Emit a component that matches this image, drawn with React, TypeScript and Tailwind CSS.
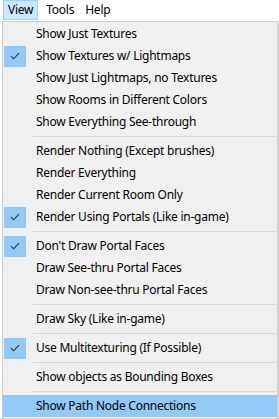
const items: (
  | { label: string; checked?: boolean; active?: boolean }
  | "sep"
)[] = [
  { label: "Show Just Textures" },
  { label: "Show Textures w/ Lightmaps", checked: true },
  { label: "Show Just Lightmaps, no Textures" },
  { label: "Show Rooms in Different Colors" },
  { label: "Show Everything See-through" },
  "sep",
  { label: "Render Nothing (Except brushes)" },
  { label: "Render Everything" },
  { label: "Render Current Room Only" },
  { label: "Render Using Portals (Like in-game)", checked: true },
  "sep",
  { label: "Don't Draw Portal Faces", checked: true },
  { label: "Draw See-thru Portal Faces" },
  { label: "Draw Non-see-thru Portal Faces" },
  "sep",
  { label: "Draw Sky (Like in-game)" },
  "sep",
  { label: "Use Multitexturing (If Possible)", checked: true },
  "sep",
  { label: "Show objects as Bounding Boxes" },
  "sep",
  { label: "Show Path Node Connections", active: true },
];

function Check() {
  return (
    <svg width="10" height="8" viewBox="0 0 10 8" fill="none">
      <path d="M1 4.2 L3.6 6.8 L9 1.2" stroke="#333" strokeWidth="1.1" />
    </svg>
  );
}

export default function App() {
  return (
    <div
      className="relative h-[419px] w-[279px] overflow-hidden bg-white text-[12px] tracking-[-0.25px] text-black"
      style={{ fontFamily: '"Noto Sans", "Open Sans", sans-serif' }}
    >
      <div className="flex h-[21px] items-start bg-white">
        <div className="ml-[3px] flex h-[20px] items-center border border-[#99d1ff] bg-[#cce8ff] px-[4px]">
          View
        </div>
        <div className="flex h-[20px] items-center px-[8px]">Tools</div>
        <div className="flex h-[20px] items-center px-[3px]">Help</div>
      </div>

      <div className="ml-[2px] w-[276px] border border-[#cccccc] bg-[#f0f0f0] py-[1px] shadow-[2px_2px_3px_rgba(0,0,0,0.2)]">
        {items.map((item, i) =>
          item === "sep" ? (
            <div key={i} className="flex h-[7px] items-center pl-[30px] pr-[1px]">
              <div className="h-px w-full bg-[#d7d7d7]" />
            </div>
          ) : (
            <div
              key={i}
              className={`flex h-[22px] items-center ${
                item.active ? "bg-[#91c9f7]" : ""
              }`}
            >
              <div className="flex w-[33px] items-center pl-[1px]">
                {item.checked ? (
                  <div className="flex h-[21px] w-[22px] items-center justify-center bg-[#91c9f7]">
                    <Check />
                  </div>
                ) : null}
              </div>
              <span className="whitespace-nowrap">{item.label}</span>
            </div>
          )
        )}
      </div>
    </div>
  );
}
